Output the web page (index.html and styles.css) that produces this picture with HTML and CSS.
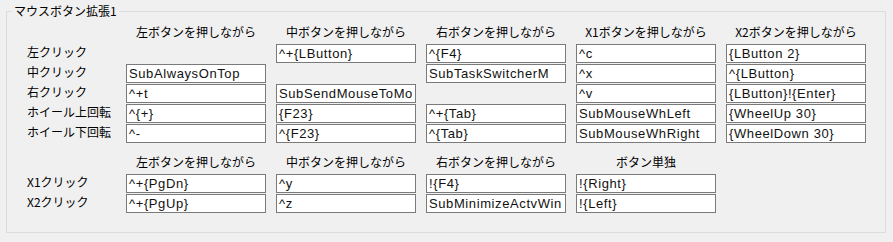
FILE: index.html
```html
<!DOCTYPE html>
<html lang="ja">
<head>
    <meta charset="UTF-8">
    <title>マウスボタン拡張1</title>
    <link rel="stylesheet" href="styles.css">
</head>
<body>
    <fieldset class="group">
        <legend>マウスボタン拡張1</legend>

        <!-- Buttons pressed together -->
        <div class="grid grid-5">
            <div></div>
            <div class="head">左ボタンを押しながら</div>
            <div class="head">中ボタンを押しながら</div>
            <div class="head">右ボタンを押しながら</div>
            <div class="head">X1ボタンを押しながら</div>
            <div class="head">X2ボタンを押しながら</div>

            <div class="label">左クリック</div>
            <div></div>
            <div class="box">^+{LButton}</div>
            <div class="box">^{F4}</div>
            <div class="box">^c</div>
            <div class="box">{LButton 2}</div>

            <div class="label">中クリック</div>
            <div class="box">SubAlwaysOnTop</div>
            <div></div>
            <div class="box">SubTaskSwitcherM</div>
            <div class="box">^x</div>
            <div class="box">^{LButton}</div>

            <div class="label">右クリック</div>
            <div class="box">^+t</div>
            <div class="box">SubSendMouseToMo</div>
            <div></div>
            <div class="box">^v</div>
            <div class="box">{LButton}!{Enter}</div>

            <div class="label">ホイール上回転</div>
            <div class="box">^{+}</div>
            <div class="box">{F23}</div>
            <div class="box">^+{Tab}</div>
            <div class="box">SubMouseWhLeft</div>
            <div class="box">{WheelUp 30}</div>

            <div class="label">ホイール下回転</div>
            <div class="box">^-</div>
            <div class="box">^{F23}</div>
            <div class="box">^{Tab}</div>
            <div class="box">SubMouseWhRight</div>
            <div class="box">{WheelDown 30}</div>
        </div>

        <!-- X buttons -->
        <div class="grid grid-4">
            <div></div>
            <div class="head">左ボタンを押しながら</div>
            <div class="head">中ボタンを押しながら</div>
            <div class="head">右ボタンを押しながら</div>
            <div class="head">ボタン単独</div>

            <div class="label">X1クリック</div>
            <div class="box">^+{PgDn}</div>
            <div class="box">^y</div>
            <div class="box">!{F4}</div>
            <div class="box">!{Right}</div>

            <div class="label">X2クリック</div>
            <div class="box">^+{PgUp}</div>
            <div class="box">^z</div>
            <div class="box">SubMinimizeActvWin</div>
            <div class="box">!{Left}</div>
        </div>
    </fieldset>
</body>
</html>
```

FILE: styles.css
```css
* {
    margin: 0;
    padding: 0;
    box-sizing: border-box;
}

body {
    font-family: "Noto Sans CJK JP", "Noto Sans", sans-serif;
    font-size: 12px;
    color: #000;
    background: #f0f0f0;
    width: 893px;
    height: 242px;
    overflow: hidden;
}

.group {
    margin: 3px 0 0 6px;
    width: 880px;
    border: 1px solid #dcdcdc;
    padding: 5px 0 19px 0;
    min-width: 0;
}

.group legend {
    margin-left: 5px;
    padding: 0 2px;
    line-height: 16px;
    height: 16px;
}

.grid {
    display: grid;
    column-gap: 10px;
    row-gap: 1px;
}

.grid-5 {
    grid-template-columns: 109px repeat(5, 140px);
}

.grid-4 {
    grid-template-columns: 109px repeat(4, 140px);
    margin-top: 11px;
}

.head {
    text-align: center;
    line-height: 16px;
    height: 16px;
    margin-bottom: 3px;
    white-space: nowrap;
}

.label {
    padding-left: 20px;
    line-height: 15px;
    height: 19px;
    white-space: nowrap;
}

.box {
    height: 19px;
    background: #fff;
    border: 1px solid #7a7a7a;
    padding-left: 2px;
    font-family: "Liberation Sans", sans-serif;
    font-size: 13px;
    letter-spacing: 0.6px;
    line-height: 17px;
    color: #111;
    white-space: nowrap;
    overflow: hidden;
}
```
